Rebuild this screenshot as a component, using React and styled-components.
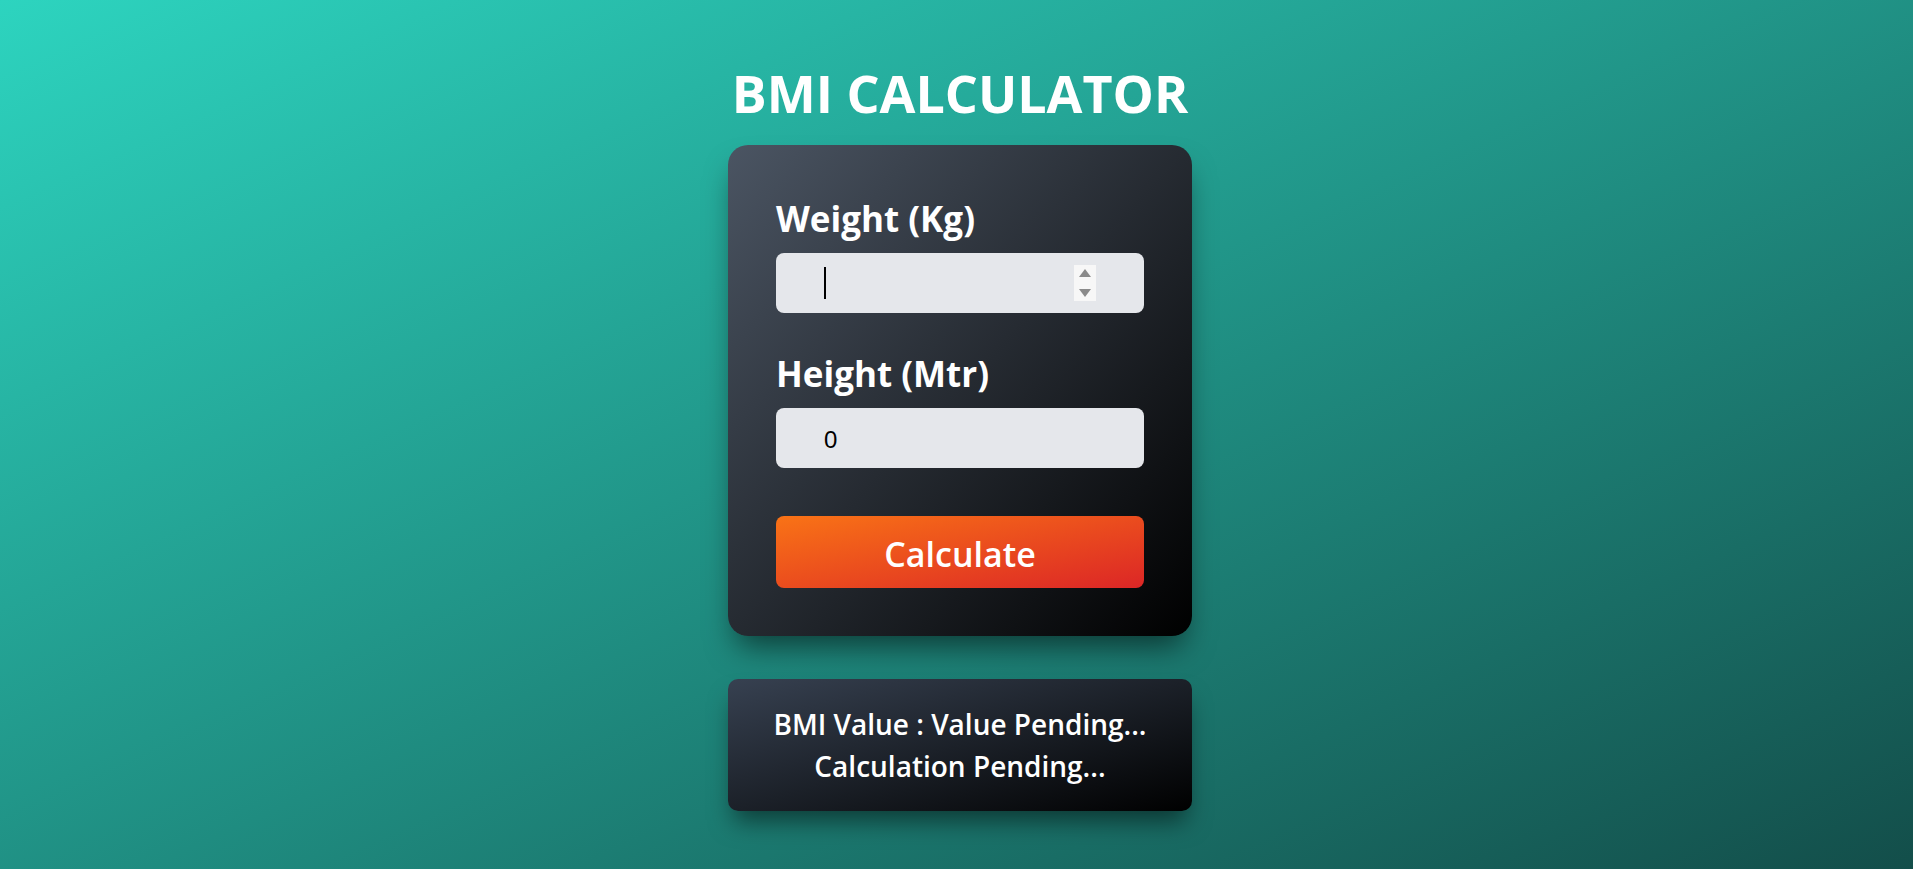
import React, { useState } from "react";
import styled, { createGlobalStyle } from "styled-components";

const GlobalStyle = createGlobalStyle`
  * {
    box-sizing: border-box;
  }
  body {
    margin: 0;
    font-family: "Open Sans", "Noto Sans", sans-serif;
  }
`;

const App = () => {
  const [weight, setWeight] = useState("");
  const [height, setHeight] = useState("0");

  return (
    <>
      <GlobalStyle />
      <Page>
        <Title>BMI CALCULATOR</Title>
        <Card>
          <Field>
            <Label htmlFor="weight">Weight (Kg)</Label>
            <InputWrap>
              <Input
                id="weight"
                type="number"
                value={weight}
                onChange={(e) => setWeight(e.target.value)}
              />
              <Caret />
              <Spinner>
                <Arrow $up />
                <Arrow />
              </Spinner>
            </InputWrap>
          </Field>
          <Field>
            <Label htmlFor="height">Height (Mtr)</Label>
            <InputWrap>
              <Input
                id="height"
                type="number"
                value={height}
                onChange={(e) => setHeight(e.target.value)}
              />
            </InputWrap>
          </Field>
          <CalcButton type="button">Calculate</CalcButton>
        </Card>
        <Result>
          <ResultLine>BMI Value : Value Pending...</ResultLine>
          <ResultLine>Calculation Pending...</ResultLine>
        </Result>
      </Page>
    </>
  );
};

export default App;

const Page = styled.div`
  min-height: 100vh;
  display: flex;
  flex-direction: column;
  align-items: center;
  padding: 63px 0 0 7px;
  background: linear-gradient(to bottom right, #2dd4bf, #134e4a);
`;

const Title = styled.h1`
  margin: 0 0 22px;
  font-size: 52px;
  line-height: 60px;
  font-weight: 700;
  color: #ffffff;
`;

const Card = styled.div`
  width: 464px;
  display: flex;
  flex-direction: column;
  padding: 48px;
  border-radius: 20px;
  background: linear-gradient(to bottom right, #4b5563, #000000);
  box-shadow: 0 18px 30px -8px rgba(0, 0, 0, 0.55);
`;

const Field = styled.div`
  display: flex;
  flex-direction: column;
  gap: 8px;
  margin-bottom: 35px;

  & + & {
    margin-bottom: 48px;
  }
`;

const Label = styled.label`
  font-size: 35px;
  line-height: 52px;
  font-weight: 700;
  color: #ffffff;
`;

const InputWrap = styled.div`
  position: relative;
`;

const Input = styled.input`
  width: 100%;
  height: 60px;
  padding: 4px 48px 0;
  border: none;
  border-radius: 8px;
  outline: none;
  background-color: #e5e7eb;
  font-family: "Liberation Sans", Arial, sans-serif;
  font-size: 24px;
  color: #000000;
  caret-color: transparent;
  appearance: textfield;

  &::-webkit-inner-spin-button,
  &::-webkit-outer-spin-button {
    -webkit-appearance: none;
    margin: 0;
  }
`;

const Caret = styled.span`
  position: absolute;
  left: 48px;
  top: 14px;
  width: 2px;
  height: 32px;
  background: #000000;
  pointer-events: none;
`;

const Spinner = styled.span`
  position: absolute;
  right: 48px;
  top: 12px;
  width: 22px;
  height: 36px;
  display: flex;
  flex-direction: column;
  align-items: center;
  justify-content: space-between;
  padding: 4px 0;
  background: #f7f7f7;
  pointer-events: none;
`;

const Arrow = styled.span`
  width: 0;
  height: 0;
  border-left: 6px solid transparent;
  border-right: 6px solid transparent;
  ${({ $up }) =>
    $up
      ? "border-bottom: 8px solid #8a8a8a;"
      : "border-top: 8px solid #8a8a8a;"}
`;

const CalcButton = styled.button`
  height: 72px;
  padding: 4px 0 0;
  border: none;
  border-radius: 8px;
  background: linear-gradient(to bottom right, #f97316, #dc2626);
  color: #ffffff;
  font-family: "Open Sans", "Noto Sans", sans-serif;
  font-size: 34px;
  font-weight: 600;
  cursor: pointer;
`;

const Result = styled.div`
  width: 464px;
  margin-top: 43px;
  padding: 24px;
  border-radius: 10px;
  background: linear-gradient(to bottom right, #374151, #000000);
  box-shadow: 0 16px 24px -6px rgba(0, 0, 0, 0.5);
  text-align: center;
  color: #ffffff;
`;

const ResultLine = styled.div`
  font-size: 28px;
  line-height: 42px;
  font-weight: 600;
`;
